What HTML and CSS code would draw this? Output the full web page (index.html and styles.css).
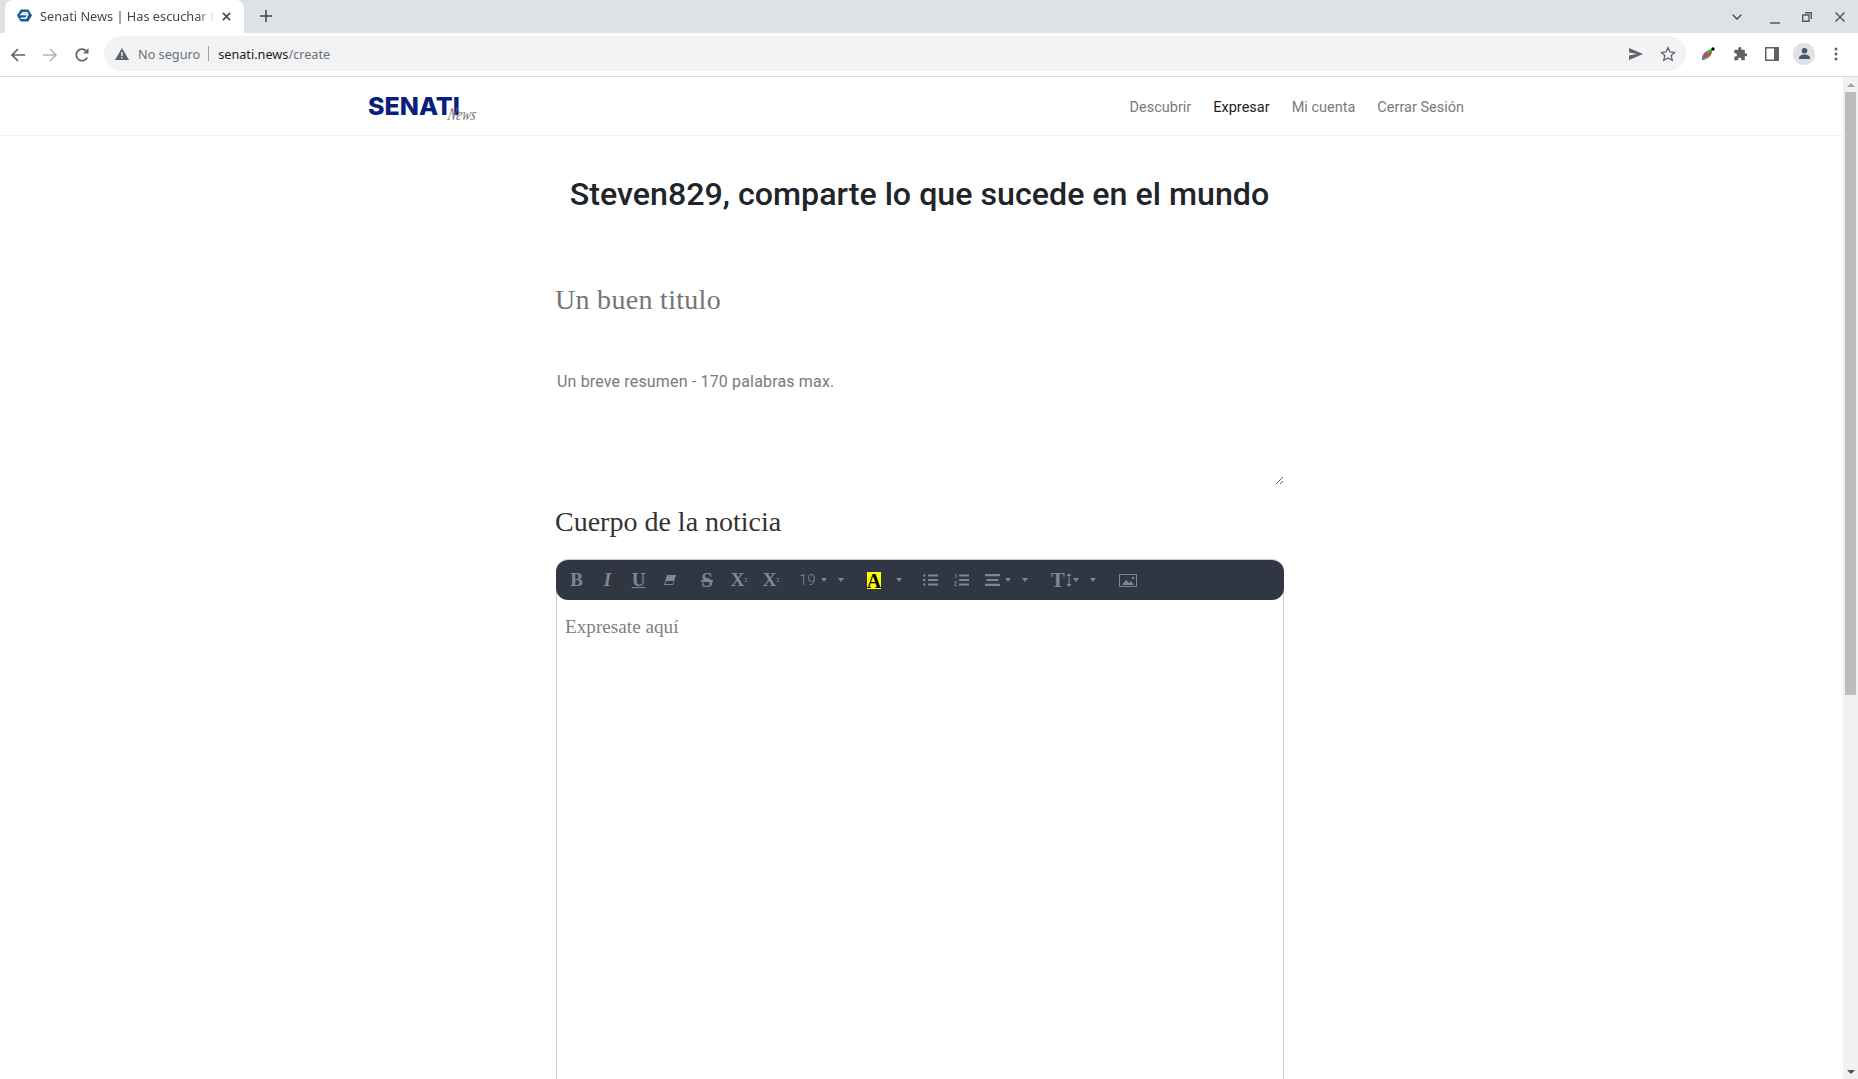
FILE: index.html
```html
<!DOCTYPE html>
<html lang="en">
<head>
  <meta charset="UTF-8">
  <title>Senati News | Create</title>
  <link rel="stylesheet" href="styles.css">
</head>
<body>
  <div class="tabstrip">
    <div class="tab">
      <svg class="favicon" viewBox="0 0 16 16"><path d="M4 1.500h8L16 8l-4 6.500H4L0 8z" fill="#1d5a96"/><path d="M11.500 5H6.500L4.500 7h7l-2 4H4" fill="none" stroke="#fff" stroke-width="1.600"/></svg>
      <span class="tab-title">Senati News | Has escuchar tu</span>
      <svg class="tab-close" viewBox="0 0 10 10"><path d="M1 1l8 8M9 1l-8 8" stroke="#45494e" stroke-width="1.800"/></svg>
    </div>
    <svg class="new-tab" viewBox="0 0 12 12"><path d="M6 0v12M0 6h12" stroke="#45494e" stroke-width="1.600"/></svg>
    <div class="window-btns">
      <svg class="win-chevron" viewBox="0 0 10 6"><path d="M.7.7L5 5l4.300-4.300" fill="none" stroke="#45494e" stroke-width="1.400"/></svg>
      <svg class="win-min" viewBox="0 0 10 10"><path d="M0 9h10" stroke="#55585c" stroke-width="1.500"/></svg>
      <svg class="win-restore" viewBox="0 0 10 10"><path d="M3 .7h6.300V7M.7 3h6.300v6.300H.7z" fill="none" stroke="#55585c" stroke-width="1.400"/></svg>
      <svg class="win-close" viewBox="0 0 10 10"><path d="M.5.5l9 9M9.500.5l-9 9" stroke="#55585c" stroke-width="1.500"/></svg>
    </div>
  </div>

  <div class="toolbar">
    <svg class="nav-icon" viewBox="0 0 16 16"><path d="M15 8H2M8 2L2 8l6 6" fill="none" stroke="#5f6368" stroke-width="1.700"/></svg>
    <svg class="nav-icon" viewBox="0 0 16 16"><path d="M1 8h13M8 2l6 6-6 6" fill="none" stroke="#b4b7bb" stroke-width="1.700"/></svg>
    <svg class="nav-icon" viewBox="0 0 16 16"><path d="M13.200 10.500A5.800 5.800 0 1 1 12.300 4" fill="none" stroke="#5f6368" stroke-width="1.700"/><path d="M14.500 1v5.500H9z" fill="#5f6368"/></svg>
    <div class="omnibox">
      <svg class="warn" viewBox="0 0 14 12"><path d="M7 0l7 12H0z" fill="#5f6368"/><path d="M6.300 4h1.400v4H6.300zM6.300 9h1.400v1.400H6.300z" fill="#f1f3f4"/></svg>
      <span class="not-secure">No seguro</span>
      <span class="omni-sep"></span>
      <span class="url">senati.news<span class="url-path">/create</span></span>
      <svg class="omni-send" viewBox="0 0 14 12"><path d="M0 0l14 6-14 6V7.500L8 6 0 4.500z" fill="#5f6368"/></svg>
      <svg class="omni-star" viewBox="0 0 16 16"><path d="M8 1.500l2 4.400 4.700.5-3.500 3.200 1 4.700L8 11.900l-4.200 2.400 1-4.700L1.300 6.400 6 5.900z" fill="none" stroke="#5f6368" stroke-width="1.300"/></svg>
    </div>
    <div class="tool-icons">
      <svg class="ext-icon" viewBox="0 0 14 14"><path d="M1 13C0 8 5 3 11 2c1 5-4 11-10 11z" fill="#18c838"/><path d="M1 13C1 9 3 6 5 5l2 3z" fill="#e020d0"/><path d="M6 11c2-1 5-4 5-7L7 7z" fill="#ff3030"/><circle cx="12" cy="2" r="1.700" fill="#000"/></svg>
      <svg class="puzzle-icon" viewBox="0 0 16 16"><path d="M6 1.500a1.800 1.800 0 0 1 3.500 0V3h4v4h1.200a1.800 1.800 0 0 1 0 3.600H13.500V15H9.500v-1.200a1.800 1.800 0 0 0-3.600 0V15H1.500v-4.200h1.200a1.800 1.800 0 0 0 0-3.600H1.500V3H6z" fill="#5f6368"/></svg>
      <svg class="panel-icon" viewBox="0 0 14 14"><path d="M0 0h14v14H0z" fill="#5f6368"/><path d="M1.500 1.500H9v11H1.500z" fill="#fff"/></svg>
      <div class="avatar"><svg viewBox="0 0 14 14"><circle cx="7" cy="4" r="3" fill="#4a5668"/><path d="M1 13c0-4 3-5 6-5s6 1 6 5z" fill="#4a5668"/></svg></div>
      <svg class="dots-icon" viewBox="0 0 4 14"><circle cx="2" cy="2" r="1.500" fill="#5f6368"/><circle cx="2" cy="7" r="1.500" fill="#5f6368"/><circle cx="2" cy="12" r="1.500" fill="#5f6368"/></svg>
    </div>
  </div>

  <div class="viewport">
    <div class="page">
      <nav class="navbar">
        <div class="logo"><span class="logo-main">SENATI</span><span class="logo-sub">News</span></div>
        <div class="nav-links">
          <a class="nav-link">Descubrir</a>
          <a class="nav-link active">Expresar</a>
          <a class="nav-link">Mi cuenta</a>
          <a class="nav-link">Cerrar Sesión</a>
        </div>
      </nav>

      <div class="content">
        <h1 class="headline">Steven829, comparte lo que sucede en el mundo</h1>
        <div class="title-field">Un buen titulo</div>
        <textarea class="summary" spellcheck="false">Un breve resumen - 170 palabras max.</textarea>
        <div class="body-label">Cuerpo de la noticia</div>

        <div class="editor">
          <div class="editor-bar">
            <div class="btn-group">
              <span class="ed-btn glyph">B</span>
              <span class="ed-btn glyph italic">I</span>
              <span class="ed-btn glyph under">U</span>
              <span class="ed-btn">
                <svg class="ed-svg" viewBox="0 0 12 10"><path d="M3 0h9L9 10H0z" fill="#7d8894"/><path d="M2.200 6h7.300L8.600 9H1.200z" fill="#303742"/></svg>
              </span>
            </div>
            <div class="btn-group group-strike">
              <span class="ed-btn wide glyph strike">S</span>
              <span class="ed-btn wide glyph">X<sup class="mini">2</sup></span>
              <span class="ed-btn wide glyph">X<sub class="mini">2</sub></span>
            </div>
            <div class="btn-group group-size">
              <span class="size-num">19</span><i class="caret"></i><i class="caret caret-far"></i>
            </div>
            <div class="btn-group group-color">
              <span class="color-a">A</span><i class="caret caret-color"></i>
            </div>
            <div class="btn-group group-lists">
              <span class="ed-btn">
                <svg class="ed-svg list" viewBox="0 0 15 12"><path d="M5 1.500h10M5 6h10M5 10.500h10" stroke="#7d8894" stroke-width="2"/><path d="M0 .5h2.500v2H0zM0 5h2.500v2H0zM0 9.500h2.500v2H0z" fill="#7d8894"/></svg>
              </span>
              <span class="ed-btn">
                <svg class="ed-svg list" viewBox="0 0 15 12"><path d="M5 1.500h10M5 6h10M5 10.500h10" stroke="#7d8894" stroke-width="2"/><path d="M.8 1L2 .3v4M0 7.800h2.800L.2 11.500H3" fill="none" stroke="#7d8894" stroke-width=".9"/></svg>
              </span>
              <span class="align-btn">
                <svg class="ed-svg list" viewBox="0 0 14 11"><path d="M0 1h14M1.500 5.500h11M0 10h14" stroke="#7d8894" stroke-width="2"/></svg>
                <i class="caret caret-align"></i><i class="caret caret-far"></i>
              </span>
            </div>
            <div class="btn-group group-height">
              <span class="big-t">T</span>
              <svg class="height-arrow" viewBox="0 0 6 14"><path d="M3 1v12" stroke="#7d8894" stroke-width="1"/><path d="M3 0l2.500 3h-5zM3 14l2.500-3h-5z" fill="#7d8894"/></svg>
              <i class="caret caret-height"></i><i class="caret caret-far"></i>
            </div>
            <div class="btn-group group-image">
              <svg class="image-icon" viewBox="0 0 18 13"><path d="M.5.5h17v12H.5z" fill="none" stroke="#7d8894"/><path d="M3 11l4-5 3 3 2-2 3 4z" fill="#7d8894"/><circle cx="14" cy="4" r="1.200" fill="#7d8894"/></svg>
            </div>
          </div>
          <div class="editor-body">Expresate aquí</div>
        </div>
      </div>
    </div>

    <div class="scrollbar">
      <i class="arrow-up"></i>
      <div class="thumb"></div>
      <i class="arrow-down"></i>
    </div>
  </div>
</body>
</html>
```

FILE: styles.css
```css
html, body {
  height: 100%;
  margin: 0;
}

body {
  display: flex;
  flex-direction: column;
  height: 1079px;
  overflow: hidden;
  background: #fff;
  font-family: "Noto Sans", sans-serif;
}

/* browser chrome */
.tabstrip {
  display: flex;
  align-items: center;
  height: 33px;
  background: #dee1e6;
  flex-shrink: 0;
}

.tab {
  display: flex;
  align-items: center;
  width: 239px;
  height: 33px;
  margin-left: 5px;
  padding-left: 12px;
  box-sizing: border-box;
  background: #fff;
  border-radius: 8px 8px 0 0;
}

.favicon {
  width: 15px;
  height: 15px;
  margin-top: -2px;
  flex-shrink: 0;
}

.tab-title {
  width: 175px;
  margin-left: 8px;
  margin-top: -2px;
  white-space: nowrap;
  font-size: 12.750px;
  color: #45494e;
  -webkit-mask-image: linear-gradient(to right, #000 90%, transparent 100%);
  mask-image: linear-gradient(to right, #000 90%, transparent 100%);
}

.tab-close {
  width: 9px;
  height: 9px;
  margin-left: 7px;
  margin-top: -1px;
}

.new-tab {
  width: 12px;
  height: 12px;
  margin-left: 16px;
  margin-top: -1px;
}

.window-btns {
  display: flex;
  align-items: center;
  margin-left: auto;
  padding-right: 13px;
}

.win-chevron {
  width: 10px;
  height: 6px;
  margin-right: 6px;
}

.win-min,
.win-restore {
  width: 10px;
  height: 10px;
  margin-left: 22px;
}

.win-close {
  width: 10px;
  height: 10px;
  margin-left: 23px;
}

.win-min {
  margin-top: 4px;
}

.toolbar {
  display: flex;
  align-items: center;
  height: 44px;
  padding-left: 10px;
  box-sizing: border-box;
  border-bottom: 1px solid #d8dadd;
  flex-shrink: 0;
}

.nav-icon {
  width: 16px;
  height: 16px;
  margin-right: 16px;
}

.omnibox {
  display: flex;
  align-items: center;
  width: 1582px;
  height: 35px;
  margin-left: -2px;
  margin-top: -2px;
  padding: 0 10px 0 11px;
  box-sizing: border-box;
  border-radius: 18px;
  background: #f1f3f4;
  font-size: 12.700px;
}

.warn {
  width: 14px;
  height: 12px;
}

.not-secure {
  margin-left: 9px;
  color: #6c7075;
}

.omni-sep {
  width: 1px;
  height: 15px;
  margin: 0 9px 0 8px;
  background: #9aa0a6;
}

.url {
  color: #202124;
}

.url-path {
  color: #6c7075;
}

.omni-send {
  width: 14px;
  height: 12px;
  margin-left: auto;
}

.omni-star {
  width: 16px;
  height: 16px;
  margin-left: 17px;
}

.tool-icons {
  display: flex;
  align-items: center;
  margin-left: 15px;
  margin-top: -2px;
}

.ext-icon,
.puzzle-icon,
.panel-icon {
  width: 14px;
  height: 14px;
  margin-right: 18px;
}

.avatar {
  display: flex;
  align-items: center;
  justify-content: center;
  width: 22px;
  height: 22px;
  margin-left: -4px;
  border-radius: 50%;
  background: #dee1e6;
}

.avatar svg {
  width: 13px;
  height: 13px;
}

.dots-icon {
  width: 4px;
  height: 14px;
  margin-left: 19px;
}

/* page */
.viewport {
  display: flex;
  flex: 1;
  min-height: 0;
}

.page {
  flex: 1;
  min-width: 0;
  overflow: hidden;
}

.navbar {
  display: flex;
  align-items: center;
  justify-content: space-between;
  height: 56px;
  padding: 2px 379px 0 368px;
  border-bottom: 1px solid #f2f2f2;
}

.logo {
  display: flex;
  align-items: flex-end;
  margin-top: -2px;
}

.logo-main {
  font-family: Inter, sans-serif;
  font-size: 25px;
  font-weight: 800;
  line-height: 30px;
  color: #0a1f7d;
}

.logo-sub {
  margin-left: -12px;
  margin-bottom: -2px;
  font-family: "Liberation Serif", serif;
  font-style: italic;
  font-size: 13px;
  line-height: 16px;
  color: #777;
  transform: skewX(-12deg) scaleY(1.350);
}

.nav-links {
  display: flex;
  gap: 22px;
}

.nav-link {
  font-family: Roboto, sans-serif;
  font-size: 14.500px;
  color: #7a7a7a;
}

.nav-link.active {
  color: #222;
}

.content {
  width: 729px;
  margin-left: 555px;
}

.headline {
  margin: 37px 0 0;
  font-family: Roboto, sans-serif;
  font-size: 32.200px;
  font-weight: 500;
  line-height: 42px;
  text-align: center;
  color: #212529;
}

.title-field {
  margin-top: 67px;
  font-family: "Liberation Serif", serif;
  font-size: 28px;
  letter-spacing: .3px;
  line-height: 36px;
  color: #757575;
}

.summary {
  display: block;
  width: 100%;
  height: 120px;
  margin-top: 47px;
  padding: 5px 2px 0;
  box-sizing: border-box;
  border: none;
  outline: none;
  overflow: hidden;
  font-family: Roboto, sans-serif;
  font-size: 16px;
  letter-spacing: .16px;
  line-height: 24px;
  color: #7a7a7a;
}

.body-label {
  margin-top: 19px;
  font-family: "Liberation Serif", serif;
  font-size: 28px;
  line-height: 36px;
  color: #333;
}

.editor {
  margin-top: 19px;
  margin-left: 1px;
  height: 700px;
  border: 1px solid #ccc;
  border-radius: 12px 12px 0 0;
  box-sizing: border-box;
}

.editor-bar {
  display: flex;
  align-items: center;
  height: 40px;
  margin: 0 -1px;
  padding-left: 5px;
  border-radius: 12px;
  background: #303742;
  color: #7d8894;
}

.btn-group {
  display: flex;
  align-items: center;
}

.ed-btn {
  display: flex;
  align-items: center;
  justify-content: center;
  width: 31px;
  height: 40px;
}

.ed-btn.wide {
  width: 32px;
}

.glyph {
  font-family: "Liberation Serif", serif;
  font-size: 19px;
  font-weight: 700;
}

.italic {
  font-style: italic;
}

.under {
  text-decoration: underline;
}

.strike {
  font-size: 21px;
  text-decoration: line-through;
  text-decoration-thickness: 2px;
}

.mini {
  font-size: 6px;
  line-height: 0;
}

.ed-svg {
  width: 12px;
  height: 10px;
}

.ed-svg.list {
  width: 15px;
  height: 12px;
}

.group-strike {
  margin-left: 6px;
}

.group-size {
  margin-left: 12px;
}

.size-num {
  font-family: Roboto, sans-serif;
  font-size: 15px;
  font-weight: 300;
}

.caret {
  display: block;
  width: 0;
  height: 0;
  margin-left: 5px;
  border-left: 3.500px solid transparent;
  border-right: 3.500px solid transparent;
  border-top: 4px solid #7d8894;
}

.caret-far {
  margin-left: 11px;
}

.group-color {
  margin-left: 23px;
}

.color-a {
  width: 14px;
  height: 17px;
  background: #ff0;
  color: #000;
  font-family: "Liberation Serif", serif;
  font-size: 20px;
  font-weight: 700;
  line-height: 18px;
  text-align: center;
}

.caret-color {
  margin-left: 15px;
}

.group-lists {
  margin-left: 13px;
}

.align-btn {
  display: flex;
  align-items: center;
  margin-left: 8px;
}

.caret-align {
  margin-left: 5px;
}

.group-height {
  margin-left: 23px;
}

.big-t {
  font-family: "Liberation Serif", serif;
  font-size: 21px;
  font-weight: 700;
}

.height-arrow {
  width: 6px;
  height: 14px;
  margin-left: 1px;
}

.caret-height {
  margin-left: 1px;
}

.group-image {
  margin-left: 23px;
}

.image-icon {
  width: 18px;
  height: 13px;
}

.editor-body {
  padding: 14px 8px;
  font-family: "Liberation Serif", serif;
  font-size: 19.200px;
  line-height: 26px;
  color: #808080;
}

/* scrollbar */
.scrollbar {
  display: flex;
  flex-direction: column;
  align-items: center;
  width: 15px;
  background: #f1f1f1;
  flex-shrink: 0;
}

.arrow-up,
.arrow-down {
  display: block;
  width: 0;
  height: 0;
  border-left: 4px solid transparent;
  border-right: 4px solid transparent;
}

.arrow-up {
  margin-top: 6px;
  border-bottom: 4px solid #a3a3a3;
}

.arrow-down {
  margin-top: auto;
  margin-bottom: 5px;
  border-top: 4px solid #505050;
}

.thumb {
  width: 11px;
  height: 603px;
  margin-top: 5px;
  background: #bcbcbc;
}
```
